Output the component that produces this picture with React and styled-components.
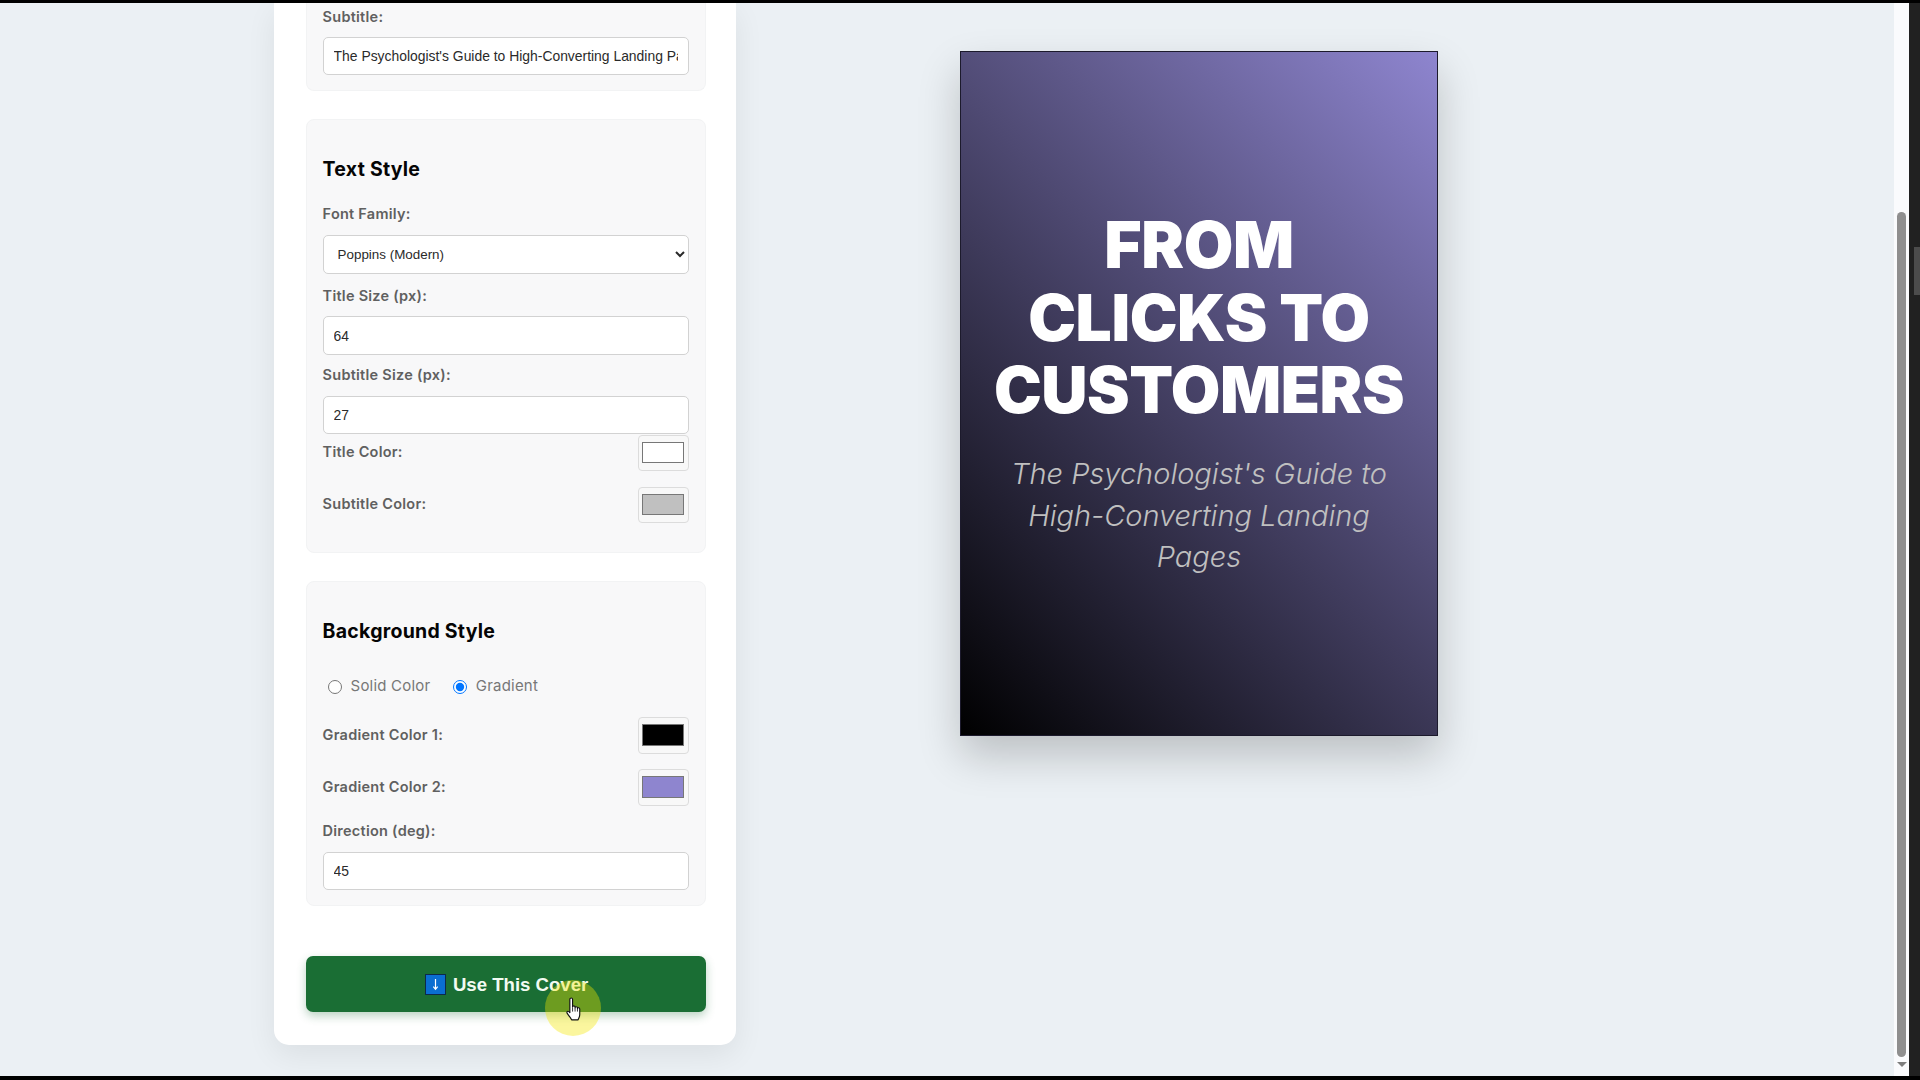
import React from 'react';
import styled, { createGlobalStyle } from 'styled-components';

const Global = createGlobalStyle`
  html, body { margin: 0; background: #000; overflow: hidden; }
  * { box-sizing: border-box; }
`;

const Screen = styled.div`
  width: 1920px;
  height: 1080px;
  display: flex;
  flex-direction: column;
  background: #000;
  overflow: hidden;
`;
const Frame = styled.div`
  margin-top: 3px;
  height: 1073px;
  display: flex;
`;
const Page = styled.main`
  width: 1894.3px;
  flex: none;
  display: flex;
  align-items: flex-start;
  gap: 224px;
  padding-left: 274px;
  background: #ebf0f4;
  overflow: hidden;
`;
const Panel = styled.section`
  width: 462px;
  flex: none;
  padding: 0 30.4px 33px 31.6px;
  background: #fff;
  border-radius: 0 0 15px 15px;
  box-shadow: 0 10px 30px rgba(0, 0, 0, 0.07);
`;
const Group = styled.div`
  background: #f8f8f9;
  border: 1px solid #f2f3f4;
  border-top: ${({ $cut }) => ($cut ? 'none' : '1px solid #f2f3f4')};
  border-radius: ${({ $cut }) => ($cut ? '0 0 8px 8px' : '8px')};
  padding: ${({ $top }) => $top}px 16px ${({ $bottom }) => $bottom}px;
  margin-bottom: ${({ $after }) => $after || 0}px;
`;
const Heading = styled.h3`
  margin: 0 0 ${({ $after }) => $after ?? 20}px;
  font: 700 19.5px/30px Inter, sans-serif;
  letter-spacing: 0.25px;
  color: #050505;
`;
const Label = styled.label`
  display: block;
  margin: ${({ $top }) => $top || 0}px 0 ${({ $bottom }) => $bottom ?? 12}px;
  font: 600 14.5px/18px Inter, sans-serif;
  letter-spacing: 0.25px;
  color: #606060;
`;
const TextInput = styled.input`
  display: block;
  width: 100%;
  height: ${({ $h }) => $h || 38}px;
  padding: 0 10px;
  background: #fff;
  border: 1px solid #d2d2d2;
  border-radius: 5px;
  font: 400 13.9px "Liberation Sans", Arial, sans-serif;
  color: #2a2a2a;
  outline: none;
`;
const Select = styled.select`
  display: block;
  width: 100%;
  height: 39px;
  padding: 0 10px;
  background: #fff;
  border: 1px solid #d2d2d2;
  border-radius: 5px;
  font: 400 13.4px "Liberation Sans", Arial, sans-serif;
  color: #2a2a2a;
`;
const ColorRow = styled.div`
  display: flex;
  align-items: center;
  justify-content: space-between;
  margin-top: ${({ $top }) => $top || 0}px;
  ${Label} { margin: 0 0 ${({ $lift }) => $lift || 0}px; }
`;
const Swatch = styled.input`
  width: 51px;
  height: ${({ $h }) => $h || 36}px;
  padding: 6.5px 3.5px;
  margin: 0;
  background: #f8f8f8;
  border: 1px solid #dcdcdc;
  border-radius: 4px;
  &::-webkit-color-swatch-wrapper { padding: 0; }
`;
const RadioRow = styled.div`
  display: flex;
  align-items: center;
  height: 20px;
  margin: 31px 0 20px;
  padding-left: 5px;
  gap: 22.5px;
`;
const RadioLabel = styled.label`
  display: flex;
  align-items: center;
  gap: 9px;
  font: 400 15px/20px Inter, sans-serif;
  letter-spacing: 0.2px;
  color: #777;
  span { position: relative; top: -1px; }
  input { margin: 1px 0 0; width: 14px; height: 14px; }
`;
const UseButton = styled.button`
  position: relative;
  display: flex;
  align-items: center;
  justify-content: center;
  gap: 7px;
  width: 100%;
  height: 56px;
  margin-top: 50px;
  padding: 2px 0 0 2px;
  background: #1a6e34;
  border: none;
  border-radius: 7px;
  box-shadow: 0 4px 10px rgba(26, 110, 52, 0.3);
  font: 700 18.6px "Liberation Sans", Arial, sans-serif;
  color: #f2fbf2;
`;
const CursorHalo = styled.span`
  position: absolute;
  left: 239px;
  top: 24px;
  width: 56px;
  height: 56px;
  border-radius: 50%;
  background: rgba(245, 232, 0, 0.38);
`;
const Hand = styled.svg`
  position: absolute;
  left: 258.5px;
  top: 41px;
`;
const Cover = styled.div`
  width: 478px;
  height: 685px;
  flex: none;
  margin-top: 48px;
  display: flex;
  flex-direction: column;
  align-items: center;
  justify-content: center;
  text-align: center;
  background: linear-gradient(45deg, #000, ${({ $to }) => $to});
  border: 1px solid #1c1a2c;
  box-shadow: 0 20px 40px rgba(0, 0, 0, 0.2);
`;
const CoverTitle = styled.h1`
  margin: 0 0 27px;
  font: 900 64px/72.4px Inter, sans-serif;
  letter-spacing: -0.4px;
  color: #fff;
`;
const CoverSubtitle = styled.p`
  margin: 0;
  font: italic 300 29px/41.5px Inter, sans-serif;
  color: #c0c0c0;
`;
const Track = styled.div`
  width: 14.7px;
  flex: none;
  display: flex;
  flex-direction: column;
  align-items: center;
  background: #fafbfd;
`;
const Thumb = styled.div`
  width: 9.5px;
  height: 845px;
  margin-top: 209px;
  background: #8f8f8f;
  border-radius: 5px;
`;
const ArrowDown = styled.div`
  margin-top: 5px;
  border-left: 5px solid transparent;
  border-right: 5px solid transparent;
  border-top: 5px solid #7d7d7d;
`;
const Edge = styled.div`
  flex: 1;
  min-width: 0;
  background: #212121;
  padding: 244px 0 0 5px;
`;
const EdgeHandle = styled.div`
  height: 48px;
  background: #4c4c4c;
`;

const DownEmoji = () => (
  <svg width="21" height="21" viewBox="0 0 21 21">
    <rect x="0.5" y="0.5" width="20" height="20" fill="#0a6ed1" stroke="#0c2a4a" />
    <path d="M10.5 5v10M8.3 12.6l2.2 2.8 2.2-2.8" fill="none" stroke="#fff" strokeWidth="1.2" />
  </svg>
);

export default function App() {
  return (
    <Screen>
      <Global />
      <Frame>
        <Page>
          <Panel>
            <Group $cut $top={5} $bottom={15} $after={28}>
              <Label $bottom={11}>Subtitle:</Label>
              <TextInput readOnly value="The Psychologist's Guide to High-Converting Landing Pages" />
            </Group>
            <Group $top={34} $bottom={29} $after={28}>
              <Heading $after={21}>Text Style</Heading>
              <Label $bottom={12}>Font Family:</Label>
              <Select defaultValue="poppins">
                <option value="poppins">Poppins (Modern)</option>
              </Select>
              <Label $top={13} $bottom={11}>Title Size (px):</Label>
              <TextInput $h={39} readOnly value="64" />
              <Label $top={11} $bottom={11.5}>Subtitle Size (px):</Label>
              <TextInput readOnly value="27" />
              <ColorRow $top={1} $lift={1}>
                <Label>Title Color:</Label>
                <Swatch type="color" defaultValue="#ffffff" />
              </ColorRow>
              <ColorRow $top={16} $lift={1}>
                <Label>Subtitle Color:</Label>
                <Swatch type="color" defaultValue="#c0c0c0" />
              </ColorRow>
            </Group>
            <Group $top={34} $bottom={15}>
              <Heading $after={0}>Background Style</Heading>
              <RadioRow>
                <RadioLabel>
                  <input type="radio" name="bg" />
                  <span>Solid Color</span>
                </RadioLabel>
                <RadioLabel>
                  <input type="radio" name="bg" defaultChecked />
                  <span>Gradient</span>
                </RadioLabel>
              </RadioRow>
              <ColorRow>
                <Label>Gradient Color 1:</Label>
                <Swatch $h={37} type="color" defaultValue="#000000" />
              </ColorRow>
              <ColorRow $top={15}>
                <Label>Gradient Color 2:</Label>
                <Swatch $h={37} type="color" defaultValue="#8e85cf" />
              </ColorRow>
              <Label $top={16} $bottom={12}>Direction (deg):</Label>
              <TextInput readOnly value="45" />
            </Group>
            <UseButton>
              <DownEmoji />
              Use This Cover
              <CursorHalo />
              <Hand width="19" height="25" viewBox="0 0 18 24">
                <path
                  d="M5.5 2.2c0-1.6 2.6-1.6 2.6 0v7.3c0-1.4 2.4-1.4 2.4 0v.8c0-1.3 2.3-1.3 2.3.1v.7c0-1.2 2.2-1.1 2.2.3v5.4c0 2.5-1.2 3.6-1.6 5.2H7.2c-.6-1.8-2.3-3.6-4.2-6.2C1.9 14 3.6 12.6 5.5 15z"
                  fill="#fff"
                  stroke="#111"
                  strokeWidth="1.1"
                  strokeLinejoin="round"
                />
                <path d="M8.1 10v4M10.5 10.5v3.5M12.8 11.2v2.8" stroke="#111" strokeWidth="0.8" fill="none" />
              </Hand>
            </UseButton>
          </Panel>
          <Cover $to="#8e85cf">
            <CoverTitle>
              FROM<br />CLICKS TO<br />CUSTOMERS
            </CoverTitle>
            <CoverSubtitle>
              The Psychologist's Guide to<br />High-Converting Landing<br />Pages
            </CoverSubtitle>
          </Cover>
        </Page>
        <Track>
          <Thumb />
          <ArrowDown />
        </Track>
        <Edge>
          <EdgeHandle />
        </Edge>
      </Frame>
    </Screen>
  );
}
